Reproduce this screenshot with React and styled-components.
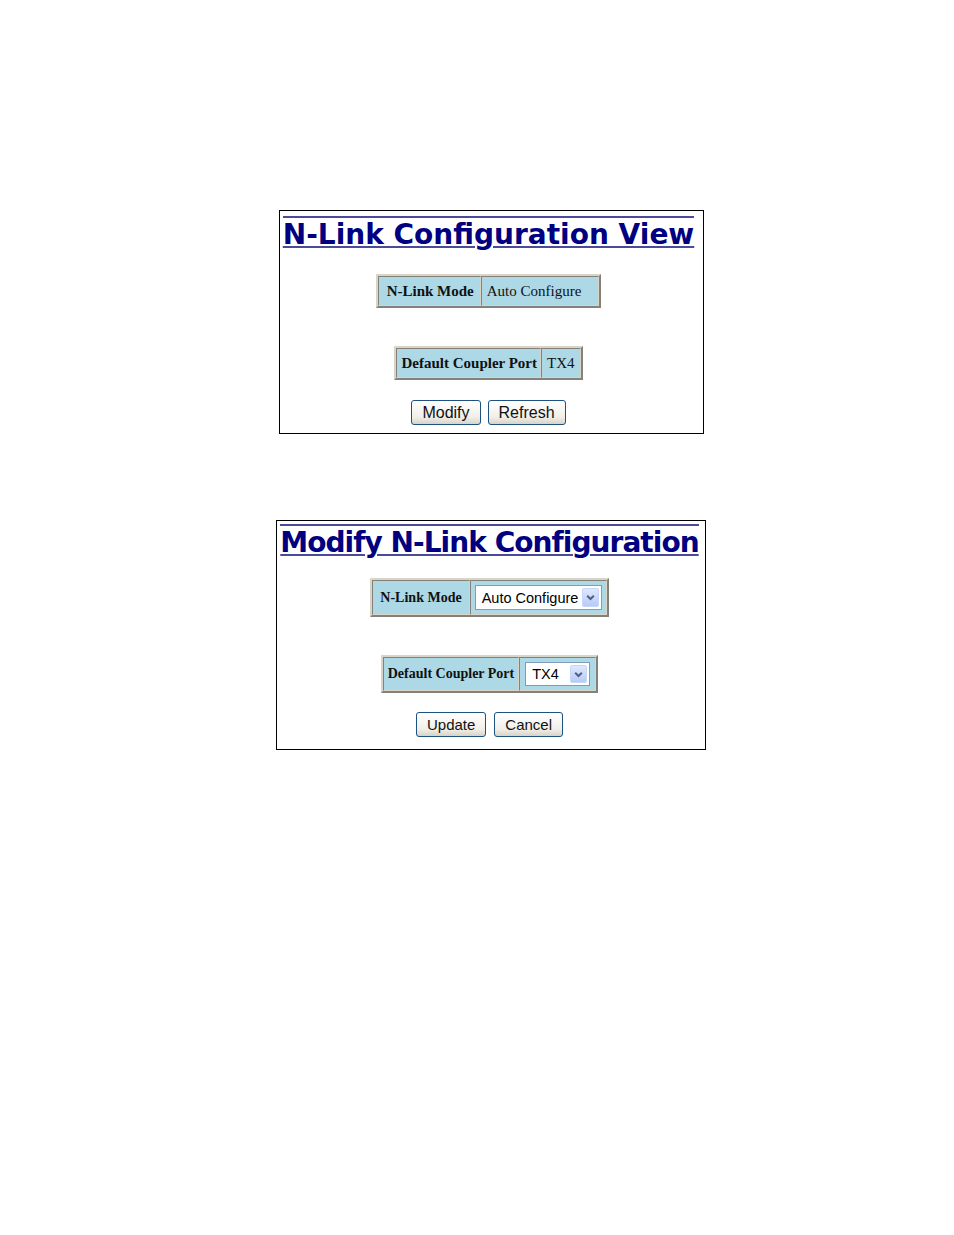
import React from "react";
import styled, { createGlobalStyle } from "styled-components";

const GlobalStyle = createGlobalStyle`
  body {
    margin: 0;
    background: #ffffff;
  }
`;

const Page = styled.div`
  width: 954px;
  height: 1235px;
  padding-top: 210px;
  box-sizing: border-box;
  display: flex;
  flex-direction: column;
  align-items: flex-start;
`;

const Panel = styled.div`
  margin-left: ${(p) => p.$left}px;
  margin-top: ${(p) => p.$top}px;
  width: ${(p) => p.$width}px;
  height: ${(p) => p.$height}px;
  padding-right: ${(p) => p.$shift}px;
  border: 1px solid #000;
  box-sizing: border-box;
  display: flex;
  flex-direction: column;
  align-items: center;
`;

const Title = styled.h1`
  margin: ${(p) => p.$top}px 0 0;
  display: inline-block;
  border-top: 2px solid #4b4b9c;
  padding-top: 2px;
  font-family: "DejaVu Sans", Verdana, sans-serif;
  font-weight: bold;
  font-size: 28px;
  line-height: 30px;
  letter-spacing: ${(p) => p.$spacing || 0}px;
  color: #000080;
  text-decoration: underline;
  text-decoration-thickness: 2px;
  text-underline-offset: 2px;
  text-decoration-color: #4b4b9c;
  white-space: nowrap;
`;

const InfoTable = styled.table`
  margin-top: ${(p) => p.$top}px;
  border-collapse: separate;
  border-spacing: 0;
  border: 2px outset #d8d4c8;
  background: #add8e6;
`;

const Cell = styled.td`
  border: 1px inset #d8d4c8;
  padding: ${(p) => p.$pad};
  font-family: "Liberation Serif", "Times New Roman", serif;
  font-size: ${(p) => p.$size}px;
  line-height: 18px;
  font-weight: ${(p) => (p.$head ? "bold" : "normal")};
  color: #111;
  white-space: nowrap;
  vertical-align: middle;
`;

const SelectBox = styled.div`
  display: flex;
  align-items: center;
  width: ${(p) => p.$width}px;
  height: ${(p) => p.$height}px;
  background: #fff;
  border: 1px solid #7f9db9;
  box-sizing: border-box;
  padding: 2px;
`;

const SelectText = styled.span`
  flex: 1;
  padding-left: 4px;
  font-family: "Liberation Sans", Arial, sans-serif;
  font-size: 14.5px;
  color: #000;
`;

const SelectArrow = styled.span`
  width: 17px;
  align-self: stretch;
  border-radius: 2px;
  background: linear-gradient(#dfe8fd, #b7cbf7);
  border: 1px solid #c6d5fc;
  box-sizing: border-box;
  display: flex;
  align-items: center;
  justify-content: center;
`;

const Buttons = styled.div`
  margin-top: ${(p) => p.$top}px;
  display: flex;
  gap: ${(p) => p.$gap}px;
`;

const Button = styled.button`
  height: 25px;
  padding: 0 ${(p) => p.$padX}px;
  border: 1px solid #1c5180;
  border-radius: 3px;
  background: linear-gradient(#ffffff, #f1efe8 70%, #d8d3c8);
  font-family: "Liberation Sans", Arial, sans-serif;
  font-size: ${(p) => p.$size}px;
  color: #111;
  cursor: pointer;
`;

const Chevron = () => (
  <svg width="9" height="7" viewBox="0 0 9 7">
    <path d="M1.2 1.8 L4.5 5 L7.8 1.8" fill="none" stroke="#4d6185" strokeWidth="2" />
  </svg>
);

const Select = ({ value, width, height }) => (
  <SelectBox $width={width} $height={height}>
    <SelectText>{value}</SelectText>
    <SelectArrow>
      <Chevron />
    </SelectArrow>
  </SelectBox>
);

export default function App() {
  return (
    <>
      <GlobalStyle />
      <Page>
        <Panel $left={279} $top={0} $width={425} $height={224} $shift={6}>
          <Title $top={5}>N-Link Configuration View</Title>
          <InfoTable $top={24}>
            <tbody>
              <tr>
                <Cell $head $size={15} $pad="5px 6px 5px 8px">
                  N-Link Mode
                </Cell>
                <Cell $size={15} $pad="5px 17px 5px 5px">
                  Auto Configure
                </Cell>
              </tr>
            </tbody>
          </InfoTable>
          <InfoTable $top={38}>
            <tbody>
              <tr>
                <Cell $head $size={15} $pad="5px 3px 5px 4px">
                  Default Coupler Port
                </Cell>
                <Cell $size={15} $pad="5px 5px 5px 5px">
                  TX4
                </Cell>
              </tr>
            </tbody>
          </InfoTable>
          <Buttons $top={20} $gap={7}>
            <Button $size={16} $padX={10}>Modify</Button>
            <Button $size={16} $padX={10}>Refresh</Button>
          </Buttons>
        </Panel>

        <Panel $left={276} $top={86} $width={430} $height={230} $shift={3}>
          <Title $top={3} $spacing={-0.95}>
            Modify N-Link Configuration
          </Title>
          <InfoTable $top={20}>
            <tbody>
              <tr>
                <Cell $head $size={14} $pad="4px 7px 4px 7px">
                  N-Link Mode
                </Cell>
                <Cell $size={14} $pad="4px 4px 4px 4px">
                  <Select value="Auto Configure" width={127} height={25} />
                </Cell>
              </tr>
            </tbody>
          </InfoTable>
          <InfoTable $top={38}>
            <tbody>
              <tr>
                <Cell $head $size={14} $pad="4px 4px 4px 4px">
                  Default Coupler Port
                </Cell>
                <Cell $size={14} $pad="4px 5px 4px 5px">
                  <Select value="TX4" width={65} height={24} />
                </Cell>
              </tr>
            </tbody>
          </InfoTable>
          <Buttons $top={19} $gap={8}>
            <Button $size={15} $padX={10}>Update</Button>
            <Button $size={15} $padX={10}>Cancel</Button>
          </Buttons>
        </Panel>
      </Page>
    </>
  );
}
